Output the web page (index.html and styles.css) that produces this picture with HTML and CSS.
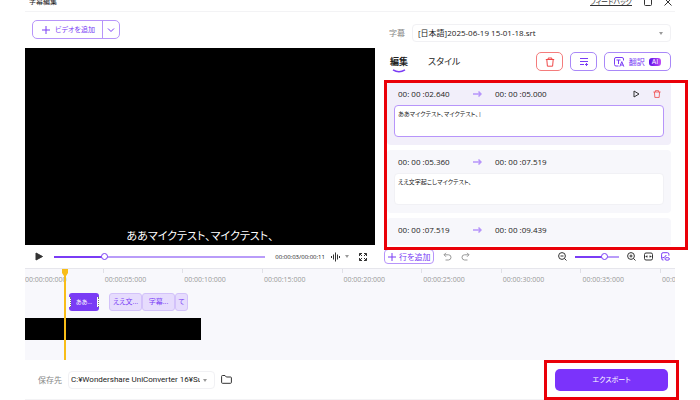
FILE: index.html
```html
<!DOCTYPE html>
<html lang="ja">
<head>
    <meta charset="UTF-8">
    <meta name="viewport" content="width=device-width, initial-scale=1.0">
    <title>字幕編集</title>
    <link rel="stylesheet" href="styles.css">
</head>
<body>
    <div class="app">
        <header class="titlebar">
            <span class="title">字幕編集</span>
            <a href="#" class="feedback">フィードバック</a>
            <button class="icon-btn win-btn" aria-label="最大化">
                <svg width="8" height="8" viewBox="0 0 8 8"><rect x="0.5" y="0.5" width="7" height="7" rx="1"/></svg>
            </button>
            <button class="icon-btn win-btn" aria-label="閉じる">
                <svg width="8" height="8" viewBox="0 0 8 8"><path d="M0.5 0.5l7 7M7.5 0.5l-7 7"/></svg>
            </button>
        </header>

        <main class="main">
            <section class="preview">
                <div class="toolbar">
                    <div class="split-btn">
                        <button class="add-video">
                            <svg width="8" height="8" viewBox="0 0 8 8"><path d="M4 0v8M0 4h8"/></svg>
                            ビデオを追加
                        </button>
                        <button class="add-more" aria-label="その他">
                            <svg width="8" height="8" viewBox="0 0 8 8"><path d="M1 2.5l3 3 3-3"/></svg>
                        </button>
                    </div>
                </div>
                <div class="video"><p class="caption">ああマイクテスト、マイクテスト、</p></div>
            </section>

            <section class="editor">
                <div class="file-row">
                    <label for="subtitle-file">字幕</label>
                    <div class="select-box">
                        <select id="subtitle-file">
                            <option>[日本語]2025-06-19 15-01-18.srt</option>
                        </select>
                    </div>
                </div>

                <div class="tabs-row">
                    <button class="tab active">編集<svg class="smile" width="14" height="4" viewBox="0 0 14 4"><path d="M1 0.8Q7 4.6 13 0.8"/></svg></button>
                    <button class="tab">スタイル</button>
                    <div class="actions">
                        <button class="action delete" aria-label="削除">
                            <svg width="10" height="10" viewBox="0 0 10 10"><path d="M0.8 2.5h8.4M3.2 2.5v-1.5h3.6v1.5M1.8 2.5l0.6 6.7h5.2l0.6-6.7"/></svg>
                        </button>
                        <button class="action" aria-label="リスト">
                            <svg width="10" height="10" viewBox="0 0 10 10"><path d="M1 1.5h8M1 4.5h8M1 7.5h4"/><path d="M7.5 6v3M6 7.5h3"/></svg>
                        </button>
                        <button class="action translate">
                            <svg width="11" height="10" viewBox="0 0 11 10"><path d="M9.5 3.5v-1.5q0-1.5-1.5-1.5h-6q-1.5 0-1.5 1.5v5.5q0 1.5 1.5 1.5h2.5M2.5 3h4M4.5 3v4M5.8 9.6l2-5 2 5M6.6 8h2.6"/></svg>
                            翻訳
                            <span class="ai">AI</span>
                        </button>
                    </div>
                </div>

                <div class="list-wrap">
                    <div class="list">
                        <article class="card current">
                            <div class="time-row">
                                <span class="time">00: 00 :02.640</span>
                                <svg class="arrow" width="9" height="8" viewBox="0 0 9 8"><path d="M0 4h8M5.5 1.5l2.5 2.5-2.5 2.5"/></svg>
                                <span class="time">00: 00 :05.000</span>
                                <div class="card-tools">
                                    <button class="icon-btn" aria-label="再生">
                                        <svg width="7" height="8" viewBox="0 0 7 8"><path d="M1 1v6l5-3z"/></svg>
                                    </button>
                                    <button class="icon-btn red" aria-label="行を削除">
                                        <svg width="8" height="8" viewBox="0 0 10 10"><path d="M0.5 2.5h9M3 2.5v-1.7h4v1.7M1.8 2.5l0.5 6.8h5.4l0.5-6.8"/></svg>
                                    </button>
                                </div>
                            </div>
                            <textarea aria-label="字幕 1">ああマイクテスト、マイクテスト、|</textarea>
                        </article>
                        <article class="card">
                            <div class="time-row">
                                <span class="time">00: 00 :05.360</span>
                                <svg class="arrow" width="9" height="8" viewBox="0 0 9 8"><path d="M0 4h8M5.5 1.5l2.5 2.5-2.5 2.5"/></svg>
                                <span class="time">00: 00 :07.519</span>
                            </div>
                            <textarea aria-label="字幕 2">ええ文字起こしマイクテスト、</textarea>
                        </article>
                        <article class="card">
                            <div class="time-row">
                                <span class="time">00: 00 :07.519</span>
                                <svg class="arrow" width="9" height="8" viewBox="0 0 9 8"><path d="M0 4h8M5.5 1.5l2.5 2.5-2.5 2.5"/></svg>
                                <span class="time">00: 00 :09.439</span>
                            </div>
                        </article>
                    </div>
                    <div class="marker list-marker"></div>
                </div>
            </section>
        </main>

        <div class="controls">
            <div class="player">
                <button class="icon-btn play" aria-label="再生">
                    <svg width="8" height="9" viewBox="0 0 8 9"><path d="M1 1v7l6.5-3.5z"/></svg>
                </button>
                <input type="range" class="seek" aria-label="再生位置" min="0" max="100" value="23">
                <span class="clock">00:00:03/00:00:11</span>
                <button class="icon-btn wave" aria-label="音量">
                    <svg width="9" height="10" viewBox="0 0 9 10"><path d="M0.5 4v2M2.5 2.5v5M4.5 0.5v9M6.5 2.5v5M8.5 4v2"/></svg>
                    <span class="caret"></span>
                </button>
                <button class="icon-btn full" aria-label="全画面">
                    <svg width="8" height="8" viewBox="0 0 8 8"><path d="M0.5 3v-2.5h2.5M5 0.5h2.5v2.5M7.5 5v2.5h-2.5M3 7.5h-2.5v-2.5M0.5 0.5l2.5 2.5M7.5 0.5l-2.5 2.5M7.5 7.5l-2.5-2.5M0.5 7.5l2.5-2.5"/></svg>
                </button>
            </div>
            <div class="line-tools">
                <button class="add-line">
                    <svg width="8" height="8" viewBox="0 0 8 8"><path d="M4 0v8M0 4h8"/></svg>
                    行を追加
                </button>
                <button class="icon-btn dim" aria-label="元に戻す">
                    <svg width="9" height="9" viewBox="0 0 9 9"><path d="M3 0.8l-2 2 2 2M1 2.8h4.5q2.5 0 2.5 2.5t-2.5 2.7h-3"/></svg>
                </button>
                <button class="icon-btn dim" aria-label="やり直し">
                    <svg width="9" height="9" viewBox="0 0 9 9"><path d="M6 0.8l2 2-2 2M8 2.8h-4.5q-2.5 0-2.5 2.5t2.5 2.7h3"/></svg>
                </button>
                <div class="zoom">
                    <button class="icon-btn" aria-label="縮小">
                        <svg width="9" height="9" viewBox="0 0 9 9"><circle cx="4" cy="4" r="3.4"/><path d="M2.5 4h3M6.5 6.5l2 2"/></svg>
                    </button>
                    <input type="range" class="zoom-range" aria-label="ズーム" min="0" max="100" value="70">
                    <button class="icon-btn" aria-label="拡大">
                        <svg width="9" height="9" viewBox="0 0 9 9"><circle cx="4" cy="4" r="3.4"/><path d="M2.5 4h3M4 2.5v3M6.5 6.5l2 2"/></svg>
                    </button>
                    <button class="icon-btn" aria-label="幅に合わせる">
                        <svg width="9" height="9" viewBox="0 0 9 9"><rect x="0.5" y="1" width="8" height="7" rx="1.5"/><path d="M2 4.5h1.5M5.5 4.5h1.5M3 3.5l-1 1 1 1M6 3.5l1 1-1 1"/></svg>
                    </button>
                    <button class="icon-btn violet" aria-label="プレビュー">
                        <svg width="9" height="9" viewBox="0 0 9 9"><path d="M2.5 8h-0.5q-1.4 0-1.4-1.5v-4.3q0-1.5 1.5-1.5h4.3q1.5 0 1.5 1.5v1.5M1 6q3 0 4.3-3"/><ellipse cx="6.2" cy="6.9" rx="2.3" ry="1.3"/></svg>
                    </button>
                </div>
            </div>
        </div>

        <section class="timeline">
            <div class="ruler">
                <span>00:00:00:000</span>
                <span>00:00:05:000</span>
                <span>00:00:10:000</span>
                <span>00:00:15:000</span>
                <span>00:00:20:000</span>
                <span>00:00:25:000</span>
                <span>00:00:30:000</span>
                <span>00:00:35:000</span>
                <span>00:00:40:000</span>
            </div>
            <div class="clips">
                <div class="clip selected"><i></i>ああ...<i></i></div>
                <div class="clip">ええ文...</div>
                <div class="clip">字幕...</div>
                <div class="clip">て</div>
            </div>
            <div class="video-track"></div>
            <div class="playhead">
                <svg width="6" height="7" viewBox="0 0 6 7"><path d="M0 0h6v4l-2 3h-2l-2-3z"/></svg>
            </div>
        </section>

        <footer class="footer">
            <label for="save-to">保存先</label>
            <div class="select-box save-box">
                <select id="save-to">
                    <option>C:¥Wondershare UniConverter 16¥Subtitles</option>
                </select>
            </div>
            <button class="icon-btn folder" aria-label="フォルダを開く">
                <svg width="11" height="9" viewBox="0 0 11 9"><path d="M0.6 7.4v-6q0-0.9 0.9-0.9h2.5l1.3 1.5h4.2q0.9 0 0.9 0.9v4.5q0 0.9-0.9 0.9h-8q-0.9 0-0.9-0.9z"/></svg>
            </button>
            <div class="export-wrap">
                <button class="export">エクスポート</button>
                <div class="marker export-marker"></div>
            </div>
        </footer>
    </div>
</body>
</html>
```

FILE: styles.css
```css
* {
    box-sizing: border-box;
}
body {
    margin: 0;
    background: #fff;
    color: #222;
    font-family: "Open Sans", "Noto Sans CJK JP", sans-serif;
    font-size: 8px;
    line-height: 12px;
    font-feature-settings: "palt";
    overflow: hidden;
}
button, select, textarea {
    font: inherit;
    font-feature-settings: inherit;
    color: inherit;
    margin: 0;
    padding: 0;
    border: 0;
    background: none;
}
button {
    cursor: pointer;
}
svg {
    display: block;
    flex: none;
    fill: none;
    stroke: currentColor;
}
.app {
    margin: 0 25px;
}
.icon-btn {
    display: flex;
    align-items: center;
    color: #333;
}
.icon-btn.red {
    color: #f04848;
}
.icon-btn.dim {
    color: #999;
}
.icon-btn.violet {
    color: #7a3cf5;
}

/* タイトルバー (上端は画面外) */
.titlebar {
    display: flex;
    align-items: center;
    gap: 12px;
    height: 20px;
    margin-top: -8px;
    padding: 1px 3px 0 4px;
    border-bottom: 1px solid #f3f3f5;
    font-size: 7px;
}
.feedback {
    margin-left: auto;
    color: #333;
}

.main {
    display: grid;
    grid-template-columns: 7fr 6fr;
}
.preview {
    display: flex;
    flex-direction: column;
}
.toolbar {
    padding: 8px 7px 9px;
}
.split-btn {
    display: inline-flex;
    height: 19px;
    border: 1px solid #b795fa;
    border-radius: 5px;
    color: #7a3cf5;
    vertical-align: top;
}
.add-video {
    display: flex;
    align-items: center;
    gap: 5px;
    padding: 0 7px 0 9px;
    font-size: 7px;
}
.add-more {
    padding: 0 4px;
    border-left: 1px solid #b795fa;
}
.video {
    display: flex;
    justify-content: center;
    align-items: flex-end;
    flex: 1;
    background: #000;
}
.caption {
    margin: 0;
    color: #fff;
    font-size: 11px;
    line-height: 18px;
}

/* 字幕エディタ */
.editor {
    padding: 12px 4px 0 12px;
}
.file-row {
    display: flex;
    align-items: center;
    gap: 7px;
    padding-left: 2px;
}
label {
    color: #888;
}
.select-box {
    position: relative;
    flex: 1;
}
.select-box select {
    display: block;
    width: 100%;
    height: 18px;
    padding: 0 14px 0 5px;
    border: 1px solid #f1f1f4;
    border-radius: 4px;
    appearance: none;
    text-overflow: clip;
}
.caret, .select-box::after {
    border: 2px solid transparent;
    border-top: 3px solid #999;
    border-bottom: 0;
}
.select-box::after {
    content: "";
    position: absolute;
    right: 8px;
    top: 8px;
}
.tabs-row {
    display: flex;
    align-items: center;
    padding: 10px 0 11px 3px;
}
.tab {
    margin-right: 20px;
    font-size: 9px;
}
.tab.active {
    position: relative;
    font-weight: bold;
}
.smile {
    position: absolute;
    left: 2px;
    top: 13px;
    color: #7a3cf5;
    stroke-width: 1.5;
}
.actions {
    display: flex;
    gap: 7px;
    margin-left: auto;
}
.action {
    display: flex;
    align-items: center;
    justify-content: center;
    gap: 5px;
    width: 27px;
    height: 19px;
    border: 1px solid #a988f8;
    border-radius: 5px;
    color: #7a3cf5;
}
.action.delete {
    border-color: #f47c7c;
    color: #f04848;
}
.action.translate {
    gap: 4px;
    width: 67px;
}
.ai {
    padding: 0 3px;
    border-radius: 3px;
    background: linear-gradient(90deg, #5a12e8, #c04cf8);
    color: #fff;
    font-size: 7px;
    line-height: 8px;
}
.list-wrap {
    position: relative;
}
.list {
    display: flex;
    flex-direction: column;
    gap: 5px;
    height: 163px;
    overflow: hidden;
}
.card {
    flex: none;
    height: 63px;
    padding: 6px 7px;
    border-radius: 4px;
    background: #f7f7fb;
}
.card.current {
    background: #f2effa;
}
.time-row {
    display: flex;
    align-items: center;
    height: 12px;
    padding: 0 3px 0 4px;
}
.time {
    width: 75px;
}
.arrow {
    margin-right: 13px;
    color: #b795fa;
    stroke-width: 1.5;
}
.card-tools {
    display: flex;
    gap: 13px;
    margin-left: auto;
}
textarea {
    display: block;
    width: 100%;
    height: 32px;
    margin-top: 5px;
    padding: 2px 3px;
    border: 1px solid #f1f1f5;
    border-radius: 4px;
    background: #fff;
    font-size: 6px;
    resize: none;
    overflow: hidden;
}
.current textarea {
    border-color: #b795fa;
}

/* 再生コントロール */
.controls {
    display: grid;
    grid-template-columns: 7fr 6fr;
    height: 23px;
}
.player, .line-tools, .zoom {
    display: flex;
    align-items: center;
}
.player {
    padding: 0 8px 0 10px;
}
.play svg {
    fill: #333;
}
.seek {
    flex: 1;
    margin: 0 10px 0 11px;
    --pos: 24%;
}
.clock {
    font-size: 6px;
}
.wave {
    gap: 5px;
    margin: 0 10px 0 6px;
}
input[type="range"] {
    appearance: none;
    min-width: 0;
    height: 8px;
    background: linear-gradient(90deg, #7a3cf5 var(--pos), #b99cf9 var(--pos)) center / 100% 2px no-repeat;
}
input[type="range"]::-webkit-slider-thumb {
    appearance: none;
    width: 7px;
    height: 7px;
    border: 1px solid #7a3cf5;
    border-radius: 50%;
    background: #fff;
}
.line-tools {
    gap: 9px;
    padding: 0 5px 0 9px;
}
.add-line {
    display: flex;
    align-items: center;
    gap: 3px;
    height: 15px;
    padding: 0 3px;
    border: 1px solid #b795fa;
    border-radius: 4px;
    color: #7a3cf5;
}
.zoom {
    gap: 8px;
    margin-left: auto;
}
.zoom-range {
    width: 44px;
    margin: 0;
    --pos: 70%;
}

/* タイムライン */
.timeline {
    position: relative;
    height: 92px;
    border-top: 1px solid #e6e6ec;
    background: #f8f8fc;
    overflow: hidden;
}
.ruler {
    display: grid;
    grid-template-columns: repeat(9, 12.25%);
    height: 24px;
    color: #999;
    font-size: 7px;
    line-height: 21px;
}
.ruler span {
    white-space: nowrap;
    background: linear-gradient(#e0e0e6, #e0e0e6) right 1px top / 1px 4px no-repeat;
}
.clips {
    display: flex;
    padding-left: 44px;
}
.clip {
    display: flex;
    align-items: center;
    justify-content: center;
    width: 33px;
    height: 18px;
    border: 1px solid #d3c2fa;
    border-radius: 3px;
    background: #e6dcfd;
    color: #7a3cf5;
    font-size: 7px;
}
.clip:last-child {
    width: 13px;
}
.clip.selected {
    justify-content: space-between;
    width: 30px;
    margin-right: 10px;
    border: 0;
    background: #7a3cf5;
    color: #fff;
    font-size: 6px;
}
.clip i {
    width: 2px;
    height: 10px;
    border-right: 1px dotted #777;
    background: #fff;
}
.video-track {
    width: 27%;
    height: 22px;
    margin-top: 7px;
    background: #000;
}
.playhead {
    position: absolute;
    left: 37px;
    top: 0;
    bottom: 0;
    width: 6px;
    background: linear-gradient(#f8bd18, #f8bd18) center / 2px 100% no-repeat;
    color: #f8bd18;
}
.playhead svg {
    fill: #f8bd18;
    stroke: none;
}

/* 保存先と書き出し */
.footer {
    display: flex;
    align-items: center;
    gap: 6px;
    height: 40px;
    padding: 0 7px 0 13px;
    border-bottom: 1px solid #f3f3f5;
}
.save-box {
    flex: 0 1 147px;
}
.save-box select {
    padding-left: 2px;
    font-family: Roboto, "Noto Sans CJK JP", sans-serif;
}
.export-wrap {
    position: relative;
    width: 113px;
    margin-left: auto;
}
.export {
    display: block;
    width: 100%;
    height: 22px;
    border-radius: 5px;
    background: #7b33fb;
    color: #fff;
    font-size: 7px;
}
.marker {
    position: absolute;
    border: 3px solid #ea0008;
    pointer-events: none;
}
.list-marker {
    inset: -2px -17px -5px -3px;
}
.export-marker {
    inset: -9px -11px;
}
```
